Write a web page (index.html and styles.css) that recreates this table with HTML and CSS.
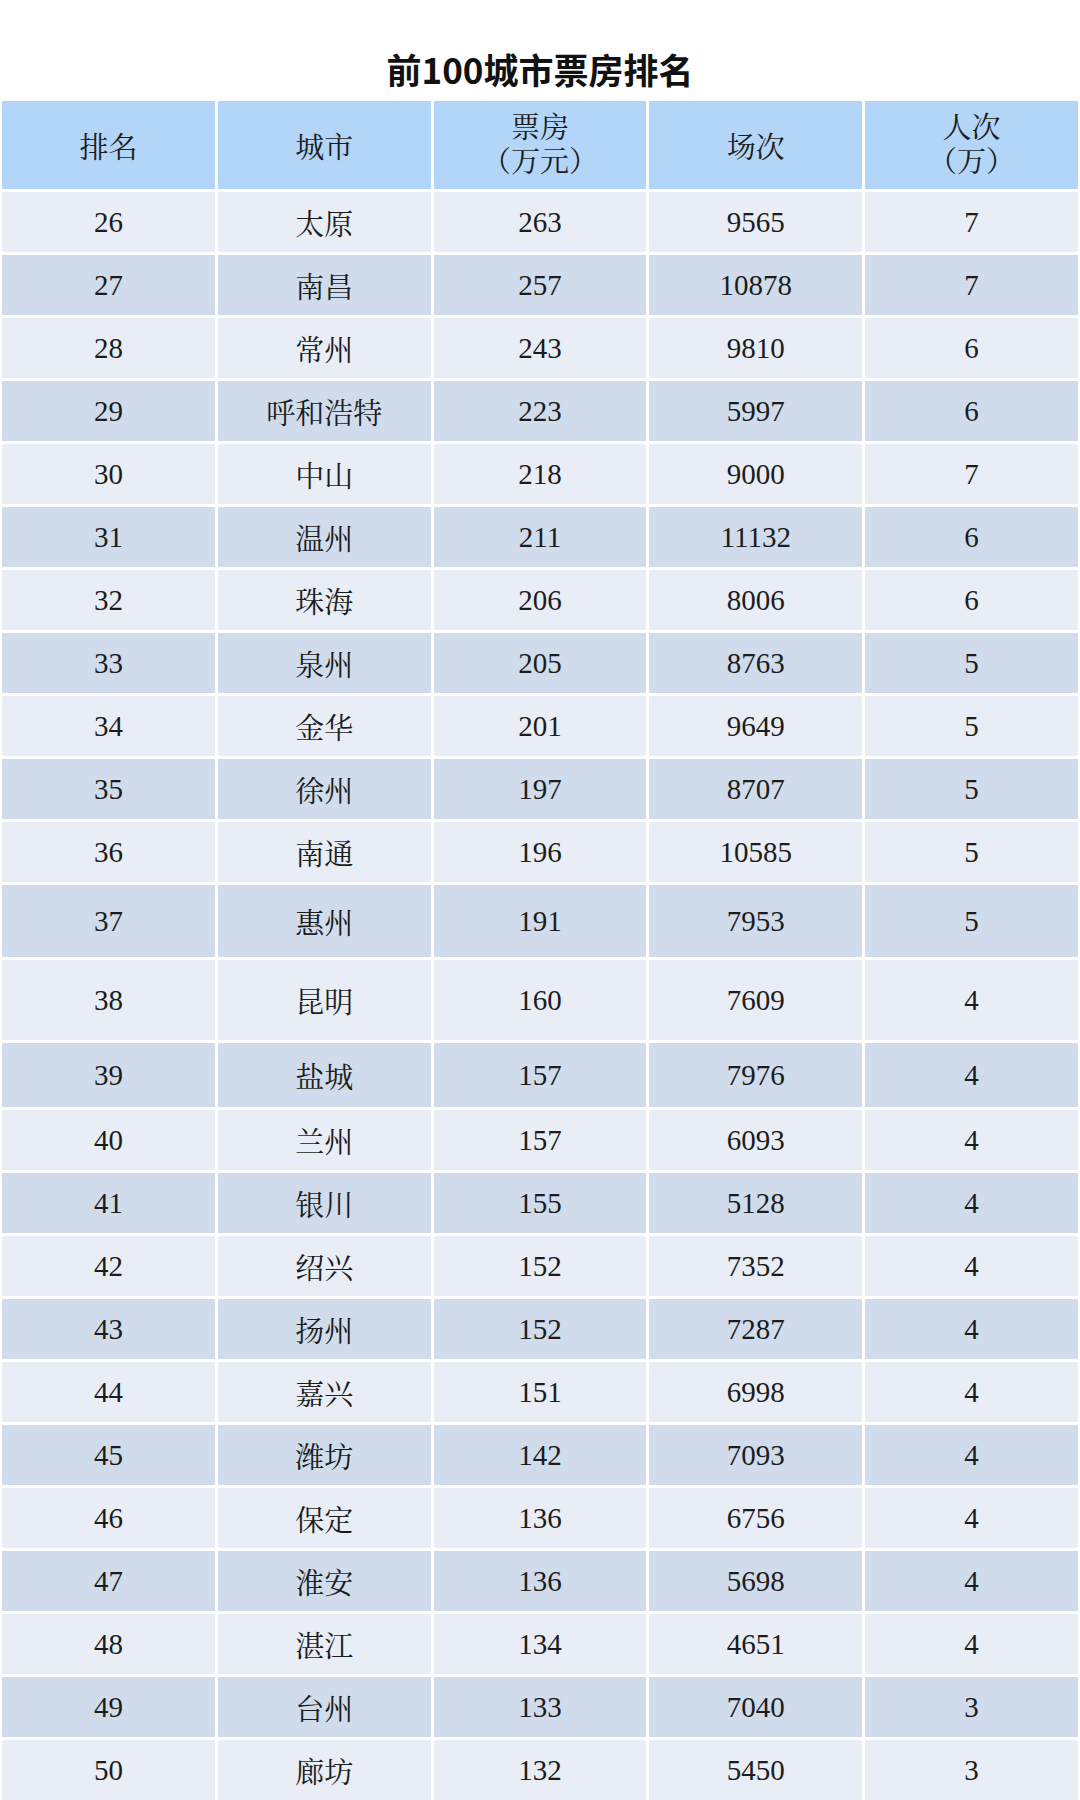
FILE: index.html
```html
<!DOCTYPE html>
<html lang="zh-CN">
<head>
<meta charset="utf-8">
<title>前100城市票房排名</title>
<link rel="stylesheet" href="styles.css">
</head>
<body>
<div class="page">
  <h1 class="title">前100城市票房排名</h1>
  <div class="table">
    <div class="row head">
      <div class="cell">排名</div>
      <div class="cell">城市</div>
      <div class="cell"><span class="two">票房<br>（万元）</span></div>
      <div class="cell">场次</div>
      <div class="cell"><span class="two">人次<br>（万）</span></div>
    </div>
    <div class="row light"><div class="cell">26</div><div class="cell">太原</div><div class="cell">263</div><div class="cell">9565</div><div class="cell">7</div></div>
    <div class="row dark"><div class="cell">27</div><div class="cell">南昌</div><div class="cell">257</div><div class="cell">10878</div><div class="cell">7</div></div>
    <div class="row light"><div class="cell">28</div><div class="cell">常州</div><div class="cell">243</div><div class="cell">9810</div><div class="cell">6</div></div>
    <div class="row dark"><div class="cell">29</div><div class="cell">呼和浩特</div><div class="cell">223</div><div class="cell">5997</div><div class="cell">6</div></div>
    <div class="row light"><div class="cell">30</div><div class="cell">中山</div><div class="cell">218</div><div class="cell">9000</div><div class="cell">7</div></div>
    <div class="row dark"><div class="cell">31</div><div class="cell">温州</div><div class="cell">211</div><div class="cell">11132</div><div class="cell">6</div></div>
    <div class="row light"><div class="cell">32</div><div class="cell">珠海</div><div class="cell">206</div><div class="cell">8006</div><div class="cell">6</div></div>
    <div class="row dark"><div class="cell">33</div><div class="cell">泉州</div><div class="cell">205</div><div class="cell">8763</div><div class="cell">5</div></div>
    <div class="row light"><div class="cell">34</div><div class="cell">金华</div><div class="cell">201</div><div class="cell">9649</div><div class="cell">5</div></div>
    <div class="row dark"><div class="cell">35</div><div class="cell">徐州</div><div class="cell">197</div><div class="cell">8707</div><div class="cell">5</div></div>
    <div class="row light"><div class="cell">36</div><div class="cell">南通</div><div class="cell">196</div><div class="cell">10585</div><div class="cell">5</div></div>
    <div class="row dark h72"><div class="cell">37</div><div class="cell">惠州</div><div class="cell">191</div><div class="cell">7953</div><div class="cell">5</div></div>
    <div class="row light h80"><div class="cell">38</div><div class="cell">昆明</div><div class="cell">160</div><div class="cell">7609</div><div class="cell">4</div></div>
    <div class="row dark h64"><div class="cell">39</div><div class="cell">盐城</div><div class="cell">157</div><div class="cell">7976</div><div class="cell">4</div></div>
    <div class="row light"><div class="cell">40</div><div class="cell">兰州</div><div class="cell">157</div><div class="cell">6093</div><div class="cell">4</div></div>
    <div class="row dark"><div class="cell">41</div><div class="cell">银川</div><div class="cell">155</div><div class="cell">5128</div><div class="cell">4</div></div>
    <div class="row light"><div class="cell">42</div><div class="cell">绍兴</div><div class="cell">152</div><div class="cell">7352</div><div class="cell">4</div></div>
    <div class="row dark"><div class="cell">43</div><div class="cell">扬州</div><div class="cell">152</div><div class="cell">7287</div><div class="cell">4</div></div>
    <div class="row light"><div class="cell">44</div><div class="cell">嘉兴</div><div class="cell">151</div><div class="cell">6998</div><div class="cell">4</div></div>
    <div class="row dark"><div class="cell">45</div><div class="cell">潍坊</div><div class="cell">142</div><div class="cell">7093</div><div class="cell">4</div></div>
    <div class="row light"><div class="cell">46</div><div class="cell">保定</div><div class="cell">136</div><div class="cell">6756</div><div class="cell">4</div></div>
    <div class="row dark"><div class="cell">47</div><div class="cell">淮安</div><div class="cell">136</div><div class="cell">5698</div><div class="cell">4</div></div>
    <div class="row light"><div class="cell">48</div><div class="cell">湛江</div><div class="cell">134</div><div class="cell">4651</div><div class="cell">4</div></div>
    <div class="row dark"><div class="cell">49</div><div class="cell">台州</div><div class="cell">133</div><div class="cell">7040</div><div class="cell">3</div></div>
    <div class="row light"><div class="cell">50</div><div class="cell">廊坊</div><div class="cell">132</div><div class="cell">5450</div><div class="cell">3</div></div>
  </div>
</div>
</body>
</html>
```

FILE: styles.css
```css
html, body {
  margin: 0;
  padding: 0;
  background: #ffffff;
}

.page {
  width: 1080px;
  height: 1800px;
  overflow: hidden;
}

.title {
  margin: 0;
  padding-top: 43px;
  height: 52px;
  padding-bottom: 6px;
  line-height: 52px;
  text-align: center;
  font-family: "Noto Sans CJK SC", "Noto Sans", sans-serif;
  font-weight: 700;
  font-size: 35px;
  color: #111111;
}

.table {
  display: flex;
  flex-direction: column;
  gap: 3px;
  padding: 0 2px;
}

.row {
  display: grid;
  grid-template-columns: repeat(5, 1fr);
  column-gap: 3px;
  height: 60px;
}

.row.head { height: 88px; }
.row.h72 { height: 72px; }
.row.h80 { height: 80px; }
.row.h64 { height: 64px; }

.cell {
  display: flex;
  align-items: center;
  justify-content: center;
  text-align: center;
  font-family: "Liberation Serif", "Noto Serif CJK SC", "Noto Sans CJK SC", serif;
  font-size: 29px;
  color: #1c1c1c;
}

.head .cell { background: #b3d6f8; }
.light .cell { background: #e9edf6; }
.dark .cell { background: #d0dcec; }

.two {
  display: block;
  line-height: 34px;
}
```
